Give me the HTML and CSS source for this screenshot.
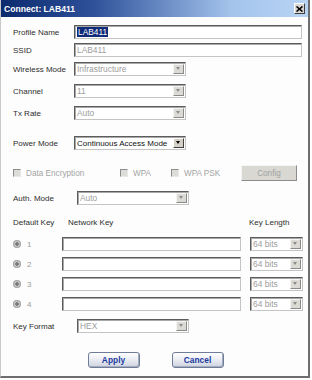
FILE: index.html
```html
<!DOCTYPE html>
<html lang="en">
<head>
  <meta charset="UTF-8" />
  <title>Connect: LAB411</title>
  <link rel="stylesheet" href="styles.css">
</head>
<body>
  <div class="window">
    <!-- Title bar -->
    <div class="titlebar">
      <span class="title">Connect: LAB411</span>
      <span class="close">
        <svg width="7" height="6" viewBox="0 0 7 6"><path d="M0.5 0.5 L6.5 5.5 M6.5 0.5 L0.5 5.5" stroke="#000" stroke-width="1.6"/></svg>
      </span>
    </div>

    <div class="form">
      <div class="row gap-8">
        <span class="lbl">Profile Name</span>
        <div class="box wide"><span class="highlight">LAB411</span></div>
      </div>
      <div class="row gap-4">
        <span class="lbl">SSID</span>
        <div class="box wide dim">LAB411</div>
      </div>
      <div class="row gap-5">
        <span class="lbl">Wireless Mode</span>
        <div class="box combo dim">Infrastructure<span class="arrow"></span></div>
      </div>
      <div class="row gap-8">
        <span class="lbl">Channel</span>
        <div class="box combo dim">11<span class="arrow"></span></div>
      </div>
      <div class="row gap-8">
        <span class="lbl">Tx Rate</span>
        <div class="box combo dim">Auto<span class="arrow"></span></div>
      </div>
      <div class="row gap-16">
        <span class="lbl">Power Mode</span>
        <div class="box combo active">Continuous Access Mode<span class="arrow dark"></span></div>
      </div>

      <div class="row checks gap-15">
        <span class="check-group g1"><span class="checkbox"></span>Data Encryption</span>
        <span class="check-group g2"><span class="checkbox"></span>WPA</span>
        <span class="check-group g3"><span class="checkbox"></span>WPA PSK</span>
        <span class="flat-btn">Config</span>
      </div>

      <div class="row gap-10">
        <span class="lbl lbl-wide">Auth. Mode</span>
        <div class="box combo dim">Auto<span class="arrow"></span></div>
      </div>

      <div class="row gap-10">
        <span class="col-default">Default Key</span>
        <span class="col-network">Network Key</span>
        <span>Key Length</span>
      </div>

      <div class="row gap-8 key-row">
        <span class="radio"></span><span class="key-num">1</span>
        <div class="box key-input"></div>
        <div class="box combo small dim">64 bits<span class="arrow"></span></div>
      </div>
      <div class="row gap-6 key-row">
        <span class="radio"></span><span class="key-num">2</span>
        <div class="box key-input"></div>
        <div class="box combo small dim">64 bits<span class="arrow"></span></div>
      </div>
      <div class="row gap-6 key-row">
        <span class="radio"></span><span class="key-num">3</span>
        <div class="box key-input"></div>
        <div class="box combo small dim">64 bits<span class="arrow"></span></div>
      </div>
      <div class="row gap-6 key-row">
        <span class="radio"></span><span class="key-num">4</span>
        <div class="box key-input"></div>
        <div class="box combo small dim">64 bits<span class="arrow"></span></div>
      </div>

      <div class="row gap-8">
        <span class="lbl lbl-wide">Key Format</span>
        <div class="box combo dim">HEX<span class="arrow"></span></div>
      </div>

      <div class="actions">
        <span class="btn">Apply</span>
        <span class="btn">Cancel</span>
      </div>
    </div>
  </div>
</body>
</html>
```

FILE: styles.css
```css
/* Base */
* {
  margin: 0;
  padding: 0;
  box-sizing: border-box;
}

body {
  background: #ffffff;
  font-family: 'Liberation Sans', Arial, sans-serif;
  font-size: 8px;
  color: #2e2e2e;
}

.window {
  width: 310px;
  height: 378px;
  background: #fdfdfd;
  border-left: 1px solid #c8c8c8;
  border-right: 2px solid #6e6e6e;
  border-bottom: 2px solid #6e6e6e;
}

/* Title bar */
.titlebar {
  height: 17px;
  display: flex;
  align-items: center;
  justify-content: space-between;
  padding: 0 3px 0 3px;
  background: linear-gradient(to right, #0c2a6e 0%, #2e519a 30%, #a4c4ec 75%, #b8d4f4 100%);
}

.title {
  color: #ffffff;
  font-weight: 700;
  font-size: 8.6px;
}

.close {
  width: 11px;
  height: 11px;
  display: flex;
  align-items: center;
  justify-content: center;
  background: #d8d6d0;
  border: 1px solid;
  border-color: #ffffff #404040 #404040 #ffffff;
}

/* Form rows */
.form {
  display: flex;
  flex-direction: column;
}

.row {
  display: flex;
  align-items: center;
  height: 14px;
  padding-left: 12px;
}

.gap-4 { margin-top: 4px; }
.gap-5 { margin-top: 5px; }
.gap-6 { margin-top: 6px; }
.gap-8 { margin-top: 8px; }
.gap-10 { margin-top: 10px; }
.gap-15 { margin-top: 15px; }
.gap-16 { margin-top: 16px; }

.lbl {
  width: 61px;
  flex: none;
}

.lbl-wide {
  width: 64px;
}

/* Sunken field boxes */
.box {
  position: relative;
  height: 14px;
  display: flex;
  align-items: center;
  padding-left: 2px;
  background: #ffffff;
  border: 1px solid;
  border-color: #5c5c5c #c4c4c4 #c4c4c4 #5c5c5c;
  box-shadow: inset 1px 1px 0 #a8a8a8;
  font-size: 8.4px;
  white-space: nowrap;
}

.wide {
  width: 228px;
}

.dim {
  color: #9c9c9c;
}

.highlight {
  background: #0e2a78;
  color: #ffffff;
  padding: 0 1px;
  line-height: 10px;
}

.combo {
  width: 112px;
}

.combo.active {
  color: #111111;
  font-size: 8px;
}

.arrow {
  position: absolute;
  right: 1px;
  top: 1px;
  width: 11px;
  height: 10px;
  background: #dcdad4;
  border: 1px solid;
  border-color: #f4f4f4 #8a8a8a #8a8a8a #f4f4f4;
}

.arrow::after {
  content: "";
  position: absolute;
  left: 2px;
  top: 2px;
  border-left: 2.5px solid transparent;
  border-right: 2.5px solid transparent;
  border-top: 3px solid #8c8c8c;
}

.arrow.dark {
  background: #d4d0c8;
  border-color: #ffffff #404040 #404040 #ffffff;
}

.arrow.dark::after {
  border-top-color: #000000;
}

/* Checkbox row */
.checks {
  height: 16px;
  color: #a4a4a4;
  font-size: 8.2px;
}

.check-group {
  display: flex;
  align-items: center;
  flex: none;
}

.g1 { width: 107px; }
.g2 { width: 51px; }
.g3 { width: 70px; }

.checkbox {
  width: 8px;
  height: 8px;
  margin-right: 5px;
  background: #dcdcd8;
  border: 1px solid;
  border-color: #8c8c8c #e8e8e8 #e8e8e8 #8c8c8c;
}

.flat-btn {
  width: 56px;
  height: 16px;
  display: flex;
  align-items: center;
  justify-content: center;
  background: #d9d8d3;
  border: 1px solid;
  border-color: #f4f4f4 #8c8c8c #8c8c8c #f4f4f4;
  color: #a0a0a0;
}

/* Key table */
.col-default { width: 55px; }
.col-network { width: 181px; }

.radio {
  width: 8px;
  height: 8px;
  border-radius: 50%;
  background: radial-gradient(circle at 50% 50%, #7a7a7a 0 1.5px, #cfcfcf 2px, #9a9a9a 4px);
  flex: none;
}

.key-num {
  width: 41px;
  padding-left: 6px;
  color: #9a9a9a;
  flex: none;
}

.key-input {
  width: 179px;
  margin-right: 9px;
}

.combo.small {
  width: 53px;
}

/* Bottom buttons */
.actions {
  display: flex;
  justify-content: center;
  gap: 32px;
  margin-top: 19px;
  padding-left: 2px;
}

.btn {
  width: 52px;
  height: 16px;
  display: flex;
  align-items: center;
  justify-content: center;
  border: 1px solid #6f7c98;
  border-radius: 3px;
  background: linear-gradient(to bottom, #ffffff 0%, #eceef4 45%, #cdd2de 100%);
  box-shadow: inset -1px -1px 0 #a4acc0;
  color: #1c3a9e;
  font-weight: 700;
  font-size: 8.4px;
}
```
